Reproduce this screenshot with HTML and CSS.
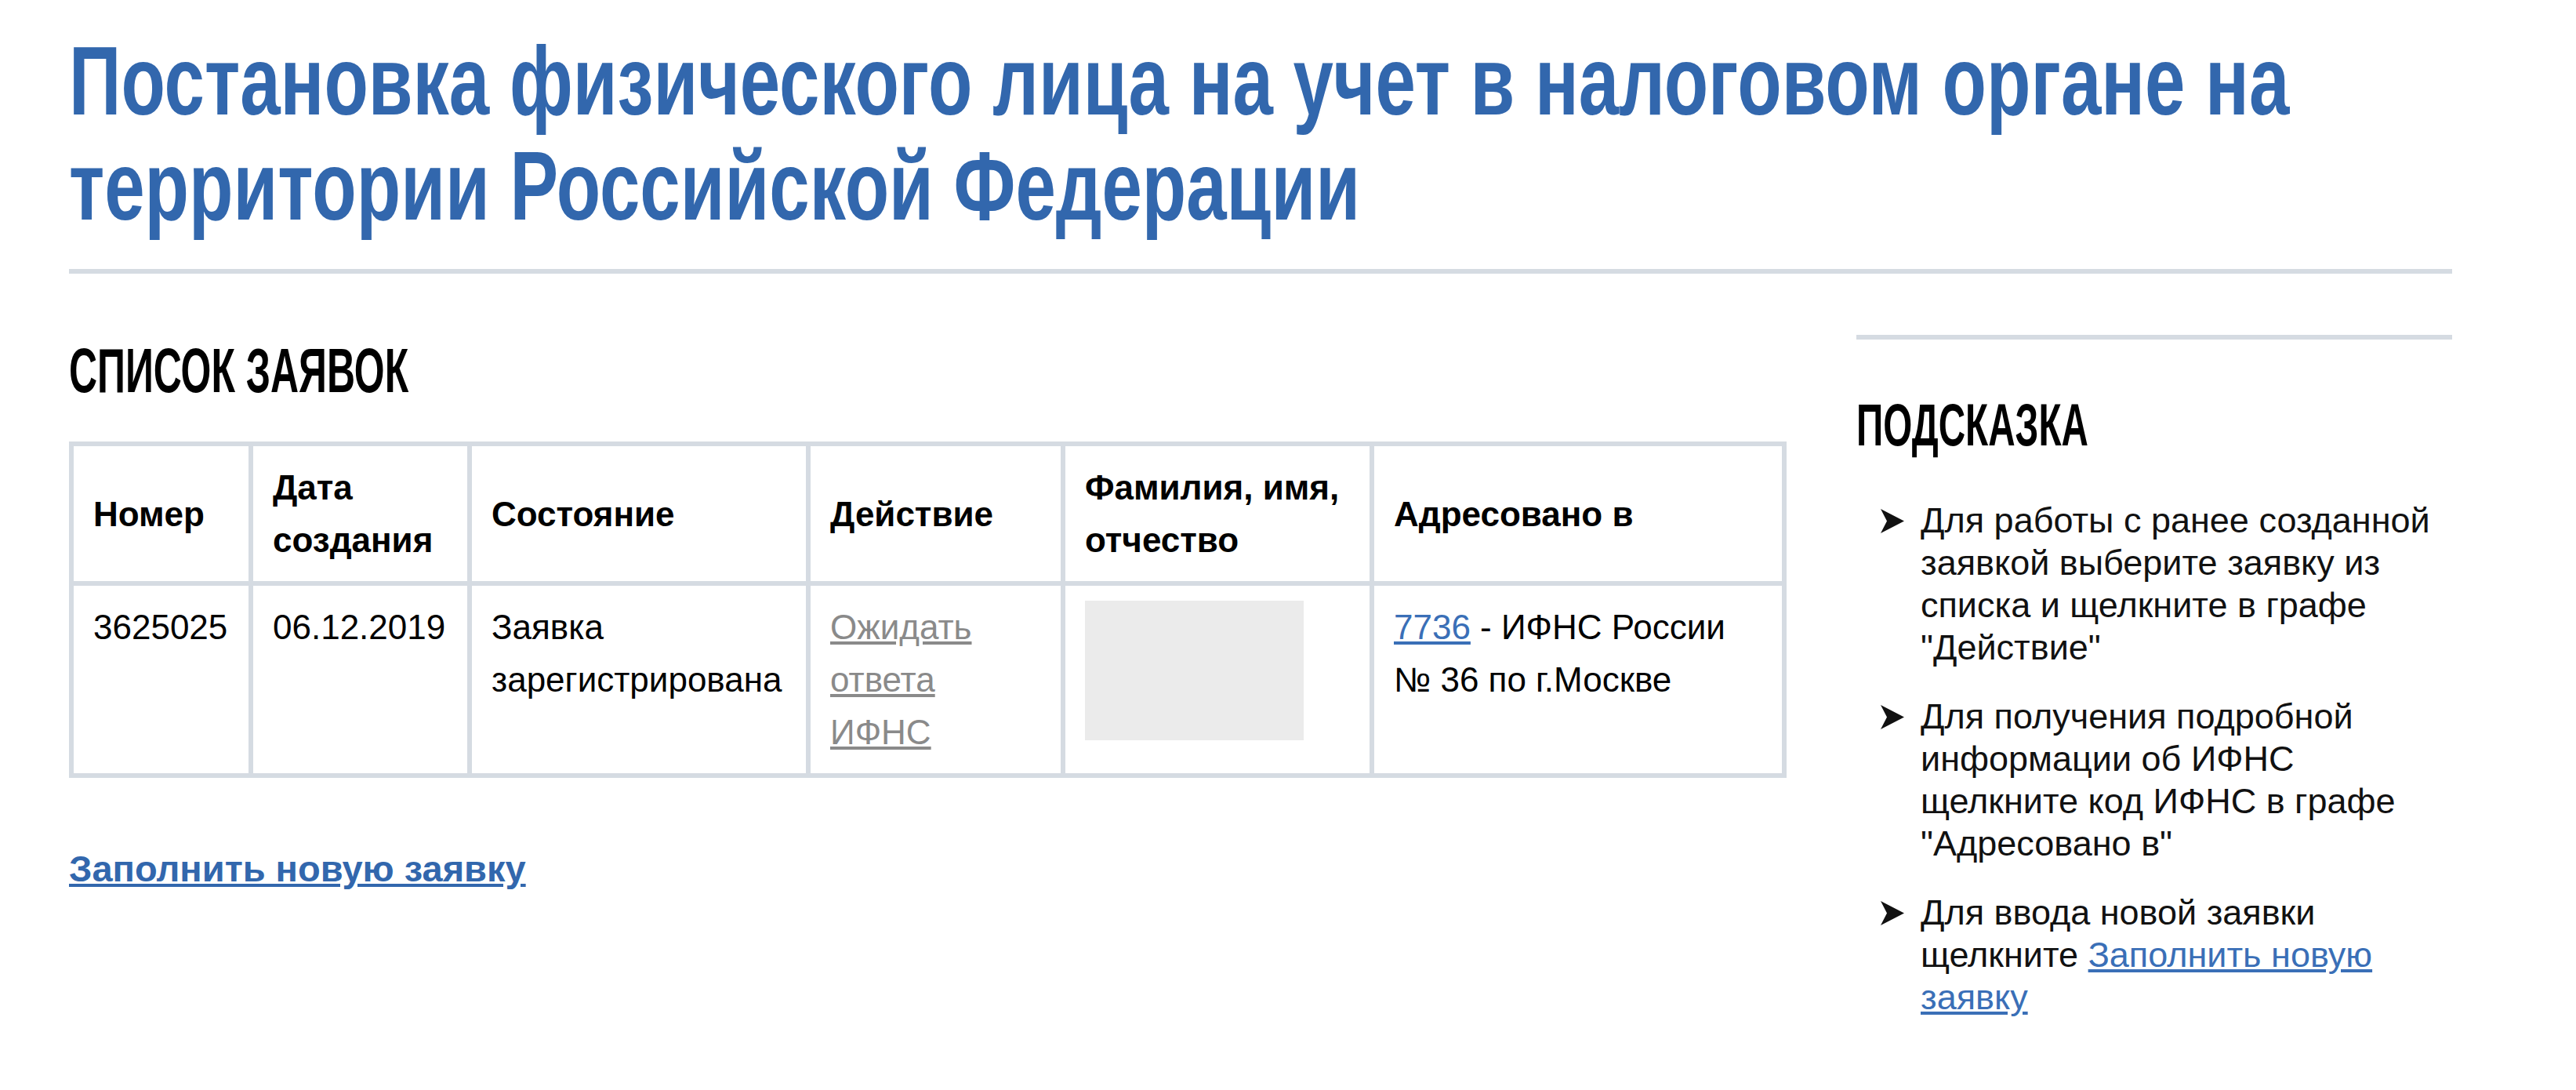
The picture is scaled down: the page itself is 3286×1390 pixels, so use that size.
FILE: index.html
```html
<!DOCTYPE html>
<html lang="ru">
<head>
<meta charset="utf-8">
<title>Постановка физического лица на учет</title>
<link rel="stylesheet" href="styles.css">
</head>
<body>
<div class="page">
  <h1 class="title">Постановка физического лица на учет в налоговом органе на<br>территории Российской Федерации</h1>
  <div class="rule"></div>
  <div class="layout">
    <main class="main">
      <h2 class="section-title">СПИСОК ЗАЯВОК</h2>
      <table class="requests">
        <colgroup>
          <col class="c-num"><col class="c-date"><col class="c-state"><col class="c-action"><col class="c-name"><col class="c-addr">
        </colgroup>
        <thead>
          <tr>
            <th>Номер</th>
            <th>Дата создания</th>
            <th>Состояние</th>
            <th>Действие</th>
            <th>Фамилия, имя, отчество</th>
            <th>Адресовано в</th>
          </tr>
        </thead>
        <tbody>
          <tr>
            <td>3625025</td>
            <td>06.12.2019</td>
            <td>Заявка зарегистрирована</td>
            <td><a class="action-link" href="#">Ожидать ответа ИФНС</a></td>
            <td><div class="name-blank"></div></td>
            <td><a class="code-link" href="#">7736</a> - ИФНС России № 36 по г.Москве</td>
          </tr>
        </tbody>
      </table>
      <p class="new-request"><a href="#">Заполнить новую заявку</a></p>
    </main>
    <aside class="hint">
      <h2 class="hint-title">ПОДСКАЗКА</h2>
      <ul class="hint-list">
        <li>
          <svg class="arrow" viewBox="0 0 32 33" aria-hidden="true"><path d="M1 1 L31 16.5 L1 32 L9 16.5 Z"/></svg>
          <span>Для работы с ранее созданной заявкой выберите заявку из списка и щелкните в графе "Действие"</span>
        </li>
        <li>
          <svg class="arrow" viewBox="0 0 32 33" aria-hidden="true"><path d="M1 1 L31 16.5 L1 32 L9 16.5 Z"/></svg>
          <span>Для получения подробной информации об ИФНС щелкните код ИФНС в графе "Адресовано в"</span>
        </li>
        <li>
          <svg class="arrow" viewBox="0 0 32 33" aria-hidden="true"><path d="M1 1 L31 16.5 L1 32 L9 16.5 Z"/></svg>
          <span>Для ввода новой заявки щелкните <a href="#">Заполнить новую заявку</a></span>
        </li>
      </ul>
    </aside>
  </div>
</div>
</body>
</html>
```

FILE: styles.css
```css
html, body {
  margin: 0;
  padding: 0;
  background: #ffffff;
}

body {
  font-family: "Liberation Sans", Arial, Helvetica, sans-serif;
  color: #000000;
}

.page {
  padding: 36px 158px 0 88px;
}

.title {
  margin: 0;
  font-family: "Liberation Sans", Arial, sans-serif;
  font-size: 124px;
  line-height: 134px;
  font-weight: 700;
  color: #3267ad;
  white-space: nowrap;
  transform: scaleX(0.745);
  transform-origin: left top;
}

.rule {
  height: 6px;
  margin-top: 39px;
  background: #d5dbe2;
}

.layout {
  display: flex;
  align-items: flex-start;
  gap: 94px;
  margin-top: 78px;
}

.main {
  width: 2186px;
  flex: none;
}

.section-title,
.hint-title {
  margin: 0;
  font-weight: 700;
  color: #000000;
  white-space: nowrap;
  transform-origin: left top;
}

.section-title {
  font-size: 80px;
  line-height: 92px;
  transform: scaleX(0.624);
}

.requests {
  margin-top: 44px;
  width: 2186px;
  border-collapse: collapse;
  table-layout: fixed;
  font-size: 44px;
  line-height: 67px;
}

.c-num { width: 229px; }
.c-date { width: 279px; }
.c-state { width: 432px; }
.c-action { width: 325px; }
.c-name { width: 394px; }
.c-addr { width: 526px; }

.requests th,
.requests td {
  border: 6px solid #d5dbe2;
  padding: 19px 25px;
  text-align: left;
}

.requests th {
  font-weight: 700;
  vertical-align: middle;
}

.requests td {
  font-weight: 400;
  vertical-align: top;
}

.action-link {
  color: #8a8a8a;
  text-decoration: underline;
}

.code-link {
  color: #3a6fb7;
  text-decoration: underline;
}

.name-blank {
  width: 279px;
  height: 178px;
  background: #ebebeb;
}

.new-request {
  margin: 89px 0 0;
  font-size: 47px;
  line-height: 53px;
  font-weight: 700;
}

.new-request a {
  color: #3267ad;
  text-decoration: underline;
}

.hint {
  width: 760px;
  flex: none;
  border-top: 6px solid #d5dbe2;
}

.hint-title {
  margin-top: 65px;
  font-size: 76px;
  line-height: 88px;
  transform: scaleX(0.627);
}

.hint-list {
  list-style: none;
  margin: 51px 0 0;
  padding: 0 10px 0 30px;
  font-size: 45px;
  line-height: 54px;
  color: #111111;
}

.hint-list li {
  display: flex;
  align-items: flex-start;
  gap: 20px;
}

.hint-list li + li {
  margin-top: 34px;
}

.arrow {
  flex: none;
  width: 32px;
  height: 33px;
  margin-top: 11px;
  fill: #111111;
}

.hint-list a {
  color: #3a6fb7;
  text-decoration: underline;
}
```
